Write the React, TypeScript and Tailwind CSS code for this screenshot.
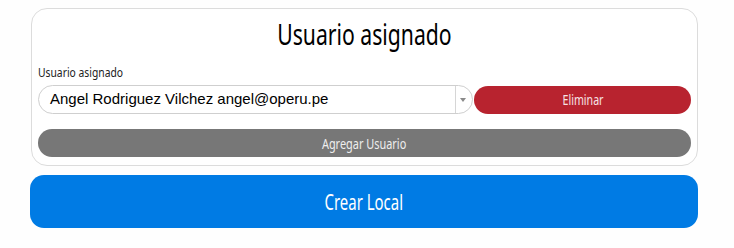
const narrow = "font-['Noto_Sans','Open_Sans',sans-serif]";

export default function App() {
  return (
    <div className="min-h-[248px] w-[734px] bg-[#fefefe] pt-2">
      <div className="ml-[30px] flex w-[668px] flex-col">
        <div className="ml-px rounded-[16px] border border-[#dcdcdc] bg-white px-[6px] pb-[8px]">
          <h2 className={`${narrow} mt-[8px] text-center text-[29px] leading-[34px] text-black`}>
            <span className="inline-block scale-x-[0.73]">Usuario asignado</span>
          </h2>
          <label className={`${narrow} mt-[14px] block text-[12px] leading-[16px] text-[#222]`}>
            <span className="inline-block origin-left scale-x-[0.86]">Usuario asignado</span>
          </label>
          <div className="mt-[4px] flex items-center gap-px">
            <div className="flex h-[29px] flex-1 items-center rounded-full border border-[#cfcfcf] bg-white">
              <span className="flex-1 pl-[11px] font-['Liberation_Sans',Arial,sans-serif] text-[15px] text-black">
                Angel Rodriguez Vilchez angel@operu.pe
              </span>
              <span className="flex h-full w-[15px] items-center justify-center border-l border-[#d6d6d6]">
                <svg width="6" height="4" viewBox="0 0 6 4">
                  <path d="M0 0h6L3 4z" fill="#8a8a8a" />
                </svg>
              </span>
              <span className="w-[2px]" />
            </div>
            <button className={`${narrow} h-[28px] w-[217px] rounded-full bg-[#b8232f] text-[14px] text-[#f6e3e5]`}>
              <span className="inline-block scale-x-[0.76]">Eliminar</span>
            </button>
          </div>
          <button className={`${narrow} mt-[15px] h-[28px] w-full rounded-full bg-[#777777] text-[14px] text-[#eeeeee]`}>
            <span className="inline-block scale-x-[0.78]">Agregar Usuario</span>
          </button>
        </div>
        <button className={`${narrow} mt-[9px] h-[53px] w-full rounded-[14px] bg-[#007be4] text-[22px] text-white`}>
          <span className="inline-block scale-x-[0.68]">Crear Local</span>
        </button>
      </div>
    </div>
  );
}
